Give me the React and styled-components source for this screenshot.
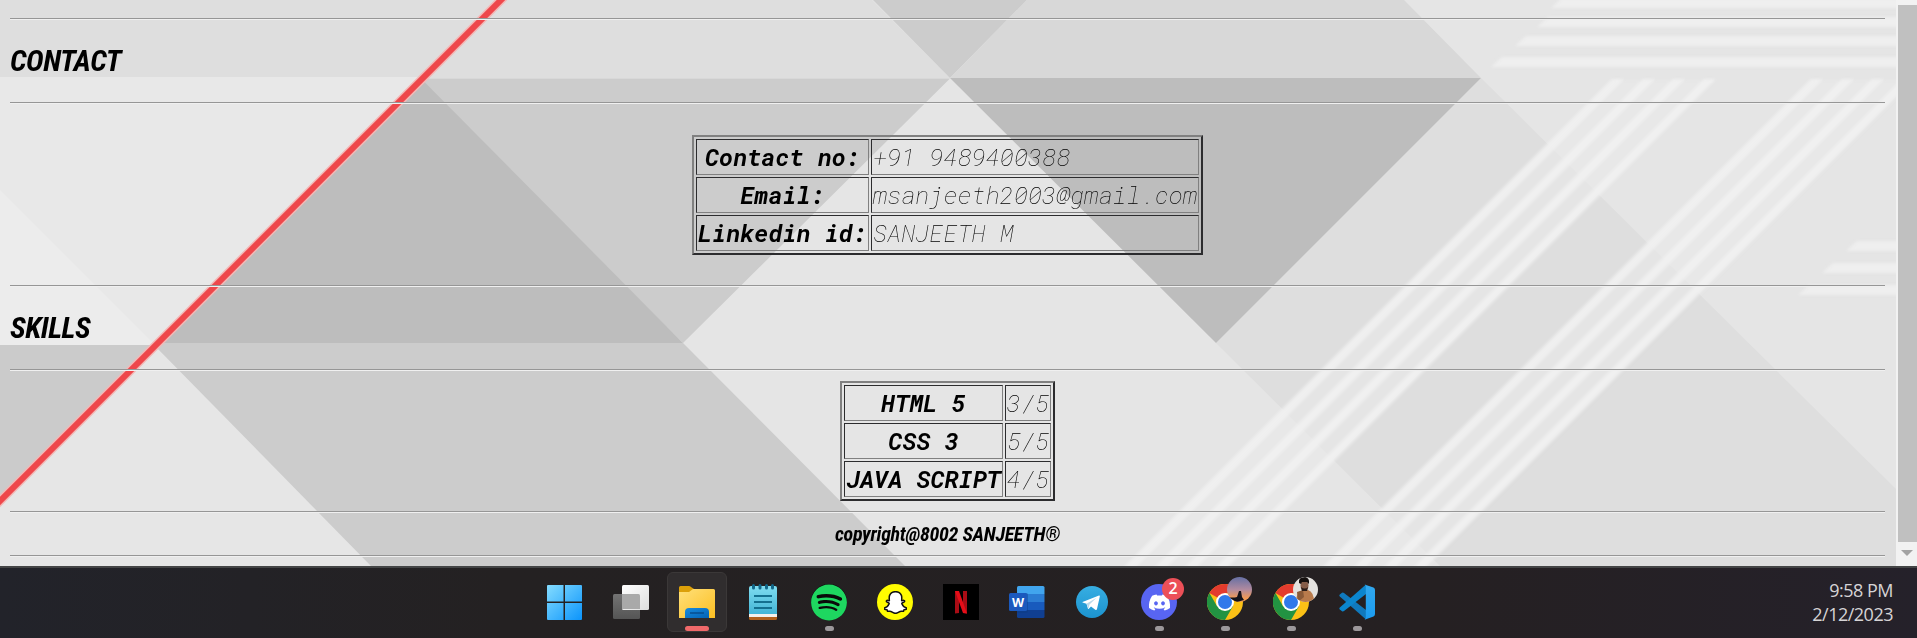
import React from 'react';
import styled, { createGlobalStyle } from 'styled-components';
import { FaSpotify, FaSnapchatGhost, FaDiscord } from 'react-icons/fa';

const GlobalStyle = createGlobalStyle`
  *, *::before, *::after { box-sizing: border-box; }
  body { margin: 0; background: #e5e5e5; overflow: hidden; }
`;

const Screen = styled.div`
  display: flex;
  flex-direction: column;
  width: 1917px;
  height: 638px;
  overflow: hidden;
`;

const Viewport = styled.div`
  display: flex;
  height: 566px;
`;

const Page = styled.main`
  position: relative;
  display: flex;
  flex-direction: column;
  width: 1896px;
  height: 566px;
  padding: 18px 11px 0 10px;
  overflow: hidden;
  color: #000;
`;

const Backdrop = styled.svg`
  position: absolute;
  inset: 0;
  z-index: -1;
`;

const Rule = styled.hr`
  flex: none;
  width: 100%;
  height: 2px;
  margin: 0;
  border: 0;
  border-top: 1px solid #969696;
  border-bottom: 1px solid #f0f0f0;
`;

const Section = styled.section`
  flex: none;
  display: flex;
  align-items: center;
  justify-content: ${(p) => (p.$center ? 'center' : 'flex-start')};
  height: ${(p) => p.$height}px;
`;

const Heading = styled.h2`
  margin: 0 0 2px;
  font: italic 700 30px/35px 'Roboto Condensed', Roboto, sans-serif;
  letter-spacing: -0.5px;
`;

const Copyright = styled.h4`
  margin: 0;
  font: italic 700 20px/24px 'Roboto Condensed', Roboto, sans-serif;
  letter-spacing: -0.3px;
`;

const Table = styled.table`
  border: 2px solid;
  border-color: #808080 #2c2c2e #2c2c2e #808080;
  border-collapse: separate;
  border-spacing: 2px;
  font-family: 'Roboto Mono', 'Liberation Mono', monospace;
  font-size: 24px;
  line-height: 32px;
  font-style: italic;
  white-space: nowrap;
`;

const Label = styled.th`
  padding: 1px;
  border: 1px solid;
  border-color: #2c2c2e #808080 #808080 #2c2c2e;
  font-weight: 700;
  text-align: center;
`;

const Value = styled.td`
  padding: 1px;
  border: 1px solid;
  border-color: #2c2c2e #808080 #808080 #2c2c2e;
  font-weight: 100;
`;

const Scrollbar = styled.aside`
  display: flex;
  flex-direction: column;
  align-items: flex-end;
  width: 21px;
  padding-top: 5px;
  background: #f2f2f2;
`;

const Thumb = styled.div`
  width: 19px;
  height: 537px;
  background: #c0c0c0;
`;

const ArrowDown = styled.div`
  width: 0;
  margin: 8px 4px 0 0;
  border: 6px solid transparent;
  border-bottom: 0;
  border-top-color: #a2a2a2;
`;

const Taskbar = styled.footer`
  display: grid;
  grid-template-columns: 531px auto 1fr;
  height: 72px;
  border-top: 2px solid #444546;
  background: linear-gradient(90deg, #22232a 0, #242122 26%, #252022 75%, #25212a 100%);
`;

const Apps = styled.nav`
  grid-column: 2;
  display: flex;
  gap: 6px;
  padding-top: 4px;
`;

const TaskButton = styled.div`
  display: flex;
  flex-direction: column;
  align-items: center;
  width: 60px;
  height: 60px;
  padding-top: 11px;
  margin-left: ${(p) => (p.$first ? 4 : 0)}px;
  border-radius: 6px;
  border: 1px solid ${(p) => (p.$active ? '#3b3838' : 'transparent')};
  background: ${(p) => (p.$active ? '#302d2e' : 'transparent')};
`;

const IconBox = styled.div`
  position: relative;
  width: 36px;
  height: 36px;
`;

const Disc = styled.div`
  display: flex;
  align-items: center;
  justify-content: center;
  width: 36px;
  height: 36px;
  border-radius: 50%;
  background: ${(p) => p.$bg};
  color: ${(p) => p.$fg};
`;

const Indicator = styled.div`
  width: ${(p) => (p.$active ? 24 : 9)}px;
  height: 5px;
  margin-top: 6px;
  border-radius: 3px;
  background: ${(p) => (p.$active ? '#f0696a' : '#9c989b')};
`;

const Badge = styled.div`
  position: absolute;
  top: -6px;
  left: 21px;
  width: 22px;
  height: 22px;
  border-radius: 50%;
  background: #ec5058;
  color: #fff;
  text-align: center;
  font: 600 16px/21px 'Open Sans', sans-serif;
`;

const Avatar = styled.svg`
  position: absolute;
  top: -7px;
  left: 20px;
  border-radius: 50%;
`;

const Clock = styled.div`
  justify-self: end;
  margin-right: 24px;
  padding-top: 10px;
  color: #d6d4d6;
  text-align: right;
  font: 400 18px/24px 'Open Sans', 'Noto Sans', sans-serif;
  letter-spacing: -0.5px;
`;

const diagonals = [1698, 1729, 1759, 1790, 1897, 1928, 1958, 1988];
const bands = [1744, 1943];
const bars = [
  [1557, 3], [1543, 22], [1521, 41], [1497, 62],
  [1852, 246], [1828, 268], [1804, 290],
];

function Artwork() {
  return (
    <Backdrop width="1896" height="566" viewBox="0 0 1896 566">
      <filter id="soft" x="0" y="0" width="1896" height="566" filterUnits="userSpaceOnUse">
        <feGaussianBlur stdDeviation="1.600" />
      </filter>
      <rect width="1896" height="566" fill="#e5e5e5" />
      <path d="M0 0H872L950 78H422L420 77H0Z" fill="#dedede" />
      <path d="M0 77H424L155 345H0Z" fill="#e8e8e8" />
      <path d="M0 190L155 345H0Z" fill="#ececec" />
      <path d="M0 345H156L0 501Z" fill="#cbcbcb" />
      <path d="M155 345L371 566H0V501Z" fill="#e6e6e6" />
      <path d="M422 78.500H950L683 343L422 84Z" fill="#cccccc" />
      <path d="M421 78.500L683 343H157Z" fill="#bdbdbd" />
      <path d="M157 343H683L905 566H371L155 346Z" fill="#cccccc" />
      <path d="M873 0H1027L950 78Z" fill="#cccccc" />
      <path d="M1027 0H1404L1481 78H950Z" fill="#d8d8d8" />
      <path d="M1481 78L1896 489V566H1440L1216 343Z" fill="#dedede" />
      <path d="M950 78H1481L1216 343Z" fill="#bdbdbd" />
      <g filter="url(#soft)">
        {bands.map((sum) => (
          <path key={sum} fill="#e9e9e9" opacity=".6" d={`M${sum - 126} 80h96L${sum - 518} 568h-96Z`} />
        ))}
        {diagonals.map((sum) => (
          <path key={sum} fill="#f1f1f1" opacity=".9" d={`M${sum - 86} 79h12L${sum - 566} 571h-12Z`} />
        ))}
        {bars.map(([x, y]) => (
          <path key={y} fill="#f0f0f0" opacity=".9" d={`M${x + 5} ${y - 5}H1900v10H${x - 6}Z`} />
        ))}
      </g>
      <path d="M504 -3L-6 507" stroke="#f3b8b6" strokeWidth="9" />
      <path d="M504 -3L-6 507" stroke="#ee474b" strokeWidth="6" />
    </Backdrop>
  );
}

const Svg = ({ children }) => (
  <svg width="36" height="36" viewBox="0 0 36 36">{children}</svg>
);

const Windows = () => (
  <Svg>
    <linearGradient id="win" x1="0" y1="0" x2="1" y2="1">
      <stop offset="0" stopColor="#84dcff" /><stop offset="1" stopColor="#0b94fb" />
    </linearGradient>
    <path fill="url(#win)" d="M1 1h15.500v16.500H0V2q0-1 1-1ZM18 1h16q1 0 1 1v15.500H18ZM0 19h16.500v17H1q-1 0-1-1ZM18 19h17v16q0 1-1 1H18Z" />
  </Svg>
);

const TaskView = () => (
  <Svg>
    <linearGradient id="tv" x1="0" y1="0" x2="1" y2="1"><stop stopColor="#fff" /><stop offset="1" stopColor="#dedede" /></linearGradient>
    <linearGradient id="tvb" x1="0" y1="0" x2="0" y2="1"><stop stopColor="#737373" /><stop offset="1" stopColor="#555" /></linearGradient>
    <rect x="0" y="10" width="27" height="25" rx="1.500" fill="url(#tvb)" />
    <rect x="9" y="1" width="27" height="25" rx="1.500" fill="url(#tv)" />
    <path d="M9 10H25.500Q27 10 27 11.500V25H9Z" fill="#a9a9a9" />
  </Svg>
);

const Explorer = () => (
  <Svg>
    <linearGradient id="fold" x1="0" y1="0" x2="1" y2="1"><stop stopColor="#ffe07a" /><stop offset="1" stopColor="#fcbf22" /></linearGradient>
    <linearGradient id="tray" x1="0" y1="0" x2="1" y2="1"><stop stopColor="#168bdd" /><stop offset="1" stopColor="#0563b5" /></linearGradient>
    <path d="M0 3.500Q0 2 1.500 2H10Q11 2 12 3L15 5V12H0Z" fill="#dca009" />
    <path d="M0 8H10L14 5H34.500Q36 5 36 6.500V34H0Z" fill="url(#fold)" />
    <path d="M6 34V28Q6 24 10 24H26Q30 24 30 28V34Z" fill="url(#tray)" />
    <path d="M11 29H25" stroke="#074e8e" strokeWidth="1.500" />
  </Svg>
);

const Notepad = () => (
  <Svg>
    <linearGradient id="note" x1="0" y1="0" x2="0" y2="1"><stop stopColor="#7fdcf0" /><stop offset="1" stopColor="#43b5d6" /></linearGradient>
    <path d="M4 31H32V34.500Q32 36 30.500 36H5.500Q4 36 4 34.500Z" fill="#b0601c" />
    <path d="M4 29H32V33H4Z" fill="#f3f0ec" />
    <path d="M4 4Q4 2 6 2H30Q32 2 32 4V30H4Z" fill="url(#note)" />
    <path d="M8.500 1.500V4M15 1.500V4M21.500 1.500V4M27.500 1.500V4" stroke="#116789" strokeWidth="3" strokeLinecap="round" />
    <path d="M9 12H27M9 18H27M9 24H27" stroke="#14708f" strokeWidth="1.800" />
  </Svg>
);

const Netflix = () => (
  <Svg>
    <rect width="36" height="36" fill="#000" />
    <path d="M12 7H16V29L12 29.500ZM20 7H24V29.500L20 29Z" fill="#a90c15" />
    <path d="M12 7H16L24 29.500L20 29Z" fill="#e50d18" />
  </Svg>
);

const Word = () => (
  <Svg>
    <path d="M8 10V3.500Q8 2 9.500 2H34Q35.500 2 35.500 3.500V10Z" fill="#41a5ee" />
    <path d="M8 10H35.500V18H8Z" fill="#2b7cd3" />
    <path d="M8 18H35.500V26H8Z" fill="#185abd" />
    <path d="M8 26H35.500V32.500Q35.500 34 34 34H9.500Q8 34 8 32.500Z" fill="#103f91" />
    <path d="M8 9H17.500Q19 9 19 10.500V27Q19 29 17 29H8Z" fill="#0d3b80" opacity=".4" />
    <rect x="0" y="9" width="18" height="18" rx="1.500" fill="#1b59bd" />
    <text x="9" y="22.500" textAnchor="middle" fill="#fff" fontFamily="Open Sans, sans-serif" fontSize="12.500" fontWeight="700">W</text>
  </Svg>
);

const Telegram = () => (
  <Svg>
    <linearGradient id="tg" x1="0" y1="0" x2="0" y2="1"><stop stopColor="#37aee2" /><stop offset="1" stopColor="#1c93cf" /></linearGradient>
    <circle cx="17" cy="18" r="16" fill="url(#tg)" />
    <path d="M7.500 18L24 11.500Q25 11.200 24.800 12.500L22 25Q21.600 26.500 20.300 25.700L16 22.500L13.800 24.700Q13 25.400 12.800 24.200L11.500 19.800L7.500 18.500Z" fill="#fff" />
    <path d="M11.500 19.800L21.500 13.800L14.500 20.600L13.500 24.500Z" fill="#b9d9ea" />
  </Svg>
);

const Chrome = () => (
  <Svg>
    <circle cx="18" cy="18" r="18" fill="#fbc116" />
    <path d="M18 18L2.410 9A18 18 0 0 1 33.590 9H18Z" fill="#e33b2e" />
    <path d="M2.410 9A18 18 0 0 0 18 36L25.800 22.500L18 18L10.200 22.500Z" fill="#229342" />
    <circle cx="18" cy="18" r="9" fill="#fff" />
    <circle cx="18" cy="18" r="7" fill="#3079ea" />
  </Svg>
);

const Code = () => (
  <Svg>
    <linearGradient id="vs" x1="0" y1="0" x2="0" y2="1"><stop stopColor="#32a8ee" /><stop offset="1" stopColor="#1b9cf0" /></linearGradient>
    <path d="M.8 10.500L3 8.800Q4 8.300 5 9L27 26V35.500L.8 12.500Q-.2 11.500 .8 10.500Z" fill="#1079bd" />
    <path d="M.8 25.500L3 27.200Q4 27.700 5 27L27 10V.5L.8 23.500Q-.2 24.500 .8 25.500Z" fill="#0b86cf" />
    <path d="M25.500 .4L34.500 3.500Q36 4.200 36 6V30Q36 31.800 34.500 32.500L25.500 35.800Q26.800 35 26.800 33.500V2.500Q26.800 1 25.500 .4Z" fill="url(#vs)" />
  </Svg>
);

const SunsetAvatar = () => (
  <Avatar width="25" height="25" viewBox="0 0 25 25">
    <linearGradient id="sky" x1="0" y1="0" x2="0" y2="1">
      <stop stopColor="#6670a4" /><stop offset=".5" stopColor="#b08a9f" /><stop offset=".85" stopColor="#f29a55" />
    </linearGradient>
    <rect width="25" height="25" fill="url(#sky)" />
    <path d="M0 20Q6 21 10 20L12 14L14 14L15 20L17 23L10 25H0Z" fill="#15131a" />
  </Avatar>
);

const PortraitAvatar = () => (
  <Avatar width="25" height="25" viewBox="0 0 25 25">
    <rect width="25" height="25" fill="#e4e2df" />
    <path d="M3 25Q3 15 10 13L15 13Q21 15 21 25Z" fill="#b97b4c" />
    <path d="M4 15L10 13L11 20L5 25Z" fill="#8b5a37" />
    <ellipse cx="11.500" cy="8.500" rx="4" ry="5.500" fill="#855d49" />
    <path d="M6 6Q5 0 12 0Q17 1 16 7L14 5H9L8 7Z" fill="#15100f" />
    <path d="M8 10Q12 13 15 10L14 14H9Z" fill="#2a1c18" />
  </Avatar>
);

const apps = [
  { id: 'start', icon: <Windows /> },
  { id: 'tasks', icon: <TaskView /> },
  { id: 'files', icon: <Explorer />, active: true, open: true },
  { id: 'notes', icon: <Notepad /> },
  { id: 'spotify', icon: <Disc $bg="#0a0a0a" $fg="#1ed760"><FaSpotify size={37} /></Disc>, open: true },
  { id: 'snap', icon: <Disc $bg="#fffc00" $fg="#fff"><FaSnapchatGhost size={23} stroke="#111" strokeWidth={34} /></Disc> },
  { id: 'netflix', icon: <Netflix /> },
  { id: 'word', icon: <Word /> },
  { id: 'telegram', icon: <Telegram /> },
  { id: 'discord', icon: <><Disc $bg="#5865f2" $fg="#fff"><FaDiscord size={23} /></Disc><Badge>2</Badge></>, open: true },
  { id: 'chrome-a', icon: <><Chrome /><SunsetAvatar /></>, open: true },
  { id: 'chrome-b', icon: <><Chrome /><PortraitAvatar /></>, open: true },
  { id: 'code', icon: <Code />, open: true },
];

const contact = [
  ['Contact no:', '+91 9489400388'],
  ['Email:', 'msanjeeth2003@gmail.com'],
  ['Linkedin id:', 'SANJEETH M'],
];
const skills = [
  ['HTML 5', '3/5'],
  ['CSS 3', '5/5'],
  ['JAVA SCRIPT', '4/5'],
];

const DataTable = ({ rows }) => (
  <Table>
    <tbody>
      {rows.map(([label, value]) => (
        <tr key={label}>
          <Label>{label}</Label>
          <Value>{value}</Value>
        </tr>
      ))}
    </tbody>
  </Table>
);

export default function App() {
  return (
    <Screen>
      <GlobalStyle />
      <Viewport>
        <Page>
          <Artwork />
          <Rule />
          <Section $height={82}><Heading>CONTACT</Heading></Section>
          <Rule />
          <Section $height={181} $center><DataTable rows={contact} /></Section>
          <Rule />
          <Section $height={82}><Heading>SKILLS</Heading></Section>
          <Rule />
          <Section $height={140} $center><DataTable rows={skills} /></Section>
          <Rule />
          <Section $height={42} $center><Copyright>copyright@8002 SANJEETH®</Copyright></Section>
          <Rule />
        </Page>
        <Scrollbar>
          <Thumb />
          <ArrowDown />
        </Scrollbar>
      </Viewport>
      <Taskbar>
        <Apps>
          {apps.map((app, i) => (
            <TaskButton key={app.id} $first={i === 0} $active={app.active}>
              <IconBox>{app.icon}</IconBox>
              {app.open && <Indicator $active={app.active} />}
            </TaskButton>
          ))}
        </Apps>
        <Clock>
          <div>9:58 PM</div>
          <div>2/12/2023</div>
        </Clock>
      </Taskbar>
    </Screen>
  );
}
